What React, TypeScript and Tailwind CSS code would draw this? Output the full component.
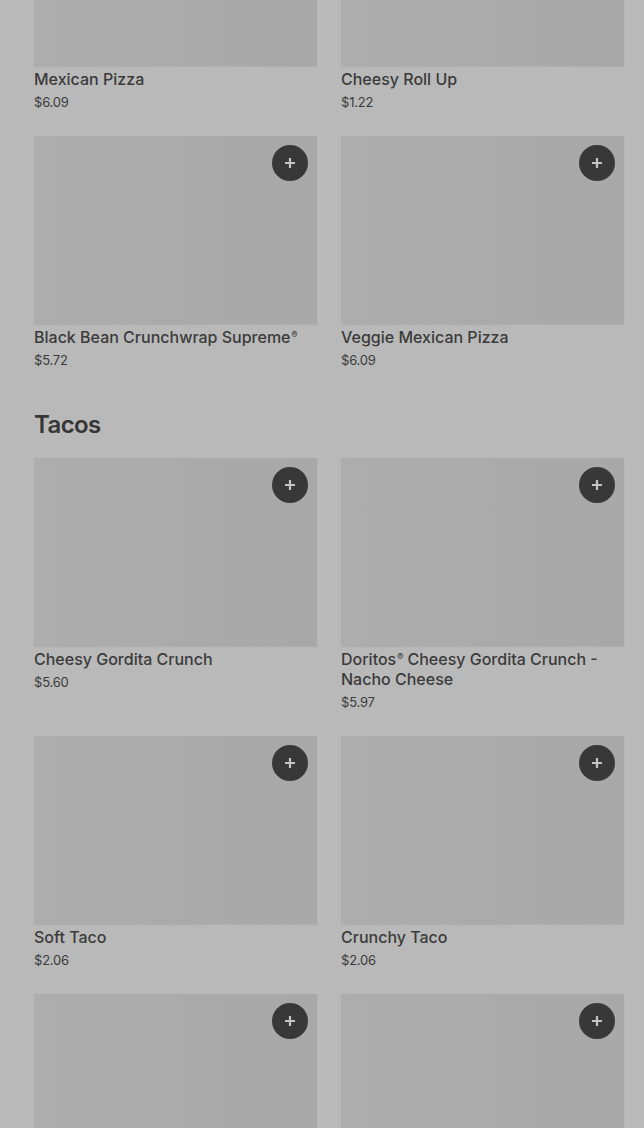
import React from 'react';

type Item = { name?: string; price?: string };

const SECTIONS: { title?: string; items: Item[] }[] = [
  {
    items: [
      { name: 'Mexican Pizza', price: '$6.09' },
      { name: 'Cheesy Roll Up', price: '$1.22' },
      { name: 'Black Bean Crunchwrap Supreme®', price: '$5.72' },
      { name: 'Veggie Mexican Pizza', price: '$6.09' },
    ],
  },
  {
    title: 'Tacos',
    items: [
      { name: 'Cheesy Gordita Crunch', price: '$5.60' },
      { name: 'Doritos® Cheesy Gordita Crunch - Nacho Cheese', price: '$5.97' },
      { name: 'Soft Taco', price: '$2.06' },
      { name: 'Crunchy Taco', price: '$2.06' },
      // next row continues below the fold
      {},
      {},
    ],
  },
];

function PlusButton() {
  return (
    <button className="absolute top-[9px] right-[9px] w-9 h-9 rounded-full bg-[#383838] flex items-center justify-center">
      <svg width="12" height="12" viewBox="0 0 12 12">
        <path d="M6 1v10M1 6h10" stroke="#c4c4c4" strokeWidth="2.2" />
      </svg>
    </button>
  );
}

// small raised ® like the menu's typeface
function Name({ text }: { text: string }) {
  const parts = text.split('®');
  return (
    <>
      {parts.map((p, i) => (
        <React.Fragment key={i}>
          {p}
          {i < parts.length - 1 && <span className="relative -top-[5px] text-[9px] leading-none ml-[1px]">®</span>}
        </React.Fragment>
      ))}
    </>
  );
}

function Card({ item }: { item: Item }) {
  return (
    <div className="flex flex-col">
      <div className="relative h-[188px] bg-gradient-to-r from-[#adadad] to-[#a8a8a8] shadow-[0_1px_1px_rgba(0,0,0,0.06)]">
        <PlusButton />
      </div>
      {item.name && (
        <>
          <div className="mt-[3px] text-[16px] leading-[20px] font-medium text-[#3b3b3b]">
            <Name text={item.name} />
          </div>
          <div className="mt-[5px] text-[13px] leading-[16px] text-[#3b3b3b] tracking-[-0.2px]">{item.price}</div>
        </>
      )}
    </div>
  );
}

export default function App() {
  return (
    <div className="h-[1128px] overflow-hidden bg-[#b9b9b9] font-['Inter','Liberation_Sans',sans-serif]">
      <div className="-mt-[122px] pl-[34px] pr-[20px]">
        {SECTIONS.map((section, i) => (
          <div key={i} className={i > 0 ? 'pt-[41px]' : ''}>
            {section.title && (
              <h2 className="text-[24px] leading-[32px] font-semibold tracking-[-0.6px] text-[#363636] mb-[17px]">
                {section.title}
              </h2>
            )}
            <div className="grid grid-cols-2 gap-x-[24px] gap-y-[26px]">
              {section.items.map((item, j) => (
                <Card key={j} item={item} />
              ))}
            </div>
          </div>
        ))}
      </div>
    </div>
  );
}
